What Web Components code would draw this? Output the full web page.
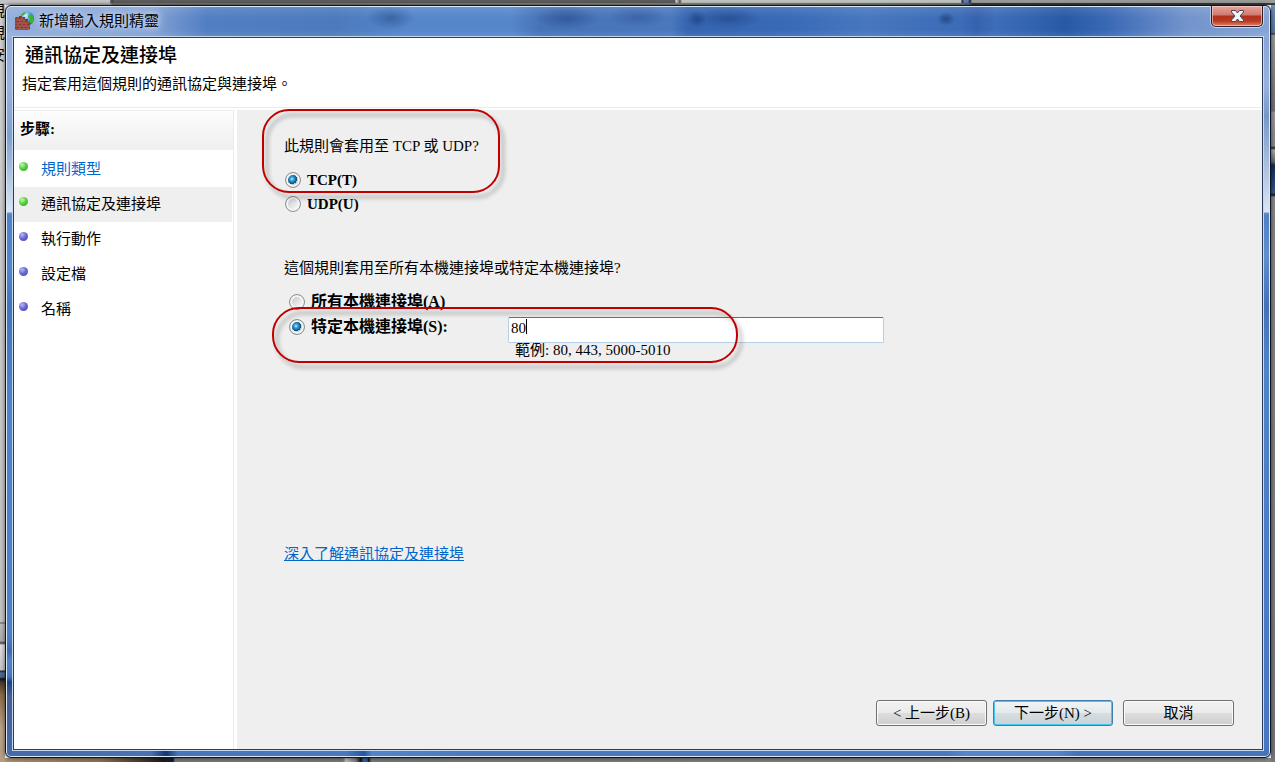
<!DOCTYPE html>
<html lang="zh-Hant">
<head>
<meta charset="utf-8">
<title>新增輸入規則精靈</title>
<style>
html { height: 100%; }
body {
  margin: 0; min-height: 100%; display: flex; box-sizing: border-box;
  font-family: "Liberation Serif", "Noto Sans CJK TC", serif; font-size: 15px; line-height: 24px; color: #000;
}
</style>
</head>
<body>
<desk-top>
  <glass-window caption="新增輸入規則精靈">
    <page-header slot="header">
      <span slot="title">通訊協定及連接埠</span>
      <span slot="summary">指定套用這個規則的通訊協定與連接埠。</span>
    </page-header>
    <wizard-steps slot="steps">
      <wizard-step state="done" href="#type">規則類型</wizard-step>
      <wizard-step state="done" current>通訊協定及連接埠</wizard-step>
      <wizard-step>執行動作</wizard-step>
      <wizard-step>設定檔</wizard-step>
      <wizard-step>名稱</wizard-step>
    </wizard-steps>
    <ports-form></ports-form>
    <wizard-actions slot="actions"></wizard-actions>
  </glass-window>
</desk-top>

<script>
function define(name, html) {
  const template = document.createElement('template');
  template.innerHTML = html;
  customElements.define(name, class extends HTMLElement {
    constructor() {
      super();
      this.attachShadow({ mode: 'open' }).append(template.content.cloneNode(true));
    }
    connectedCallback() {
      const caption = this.shadowRoot.querySelector('[data-caption]');
      if (caption) caption.textContent = this.getAttribute('caption');
      const link = this.shadowRoot.querySelector('a[data-step]');
      if (link && this.hasAttribute('href')) link.href = this.getAttribute('href');
    }
  });
}

define('desk-top', `
<style>
:host {
  flex: 1; display: flex; box-sizing: border-box; padding: 5px 4px 4px 5px; position: relative; overflow: hidden;
  background:
    linear-gradient(90deg, #c4c4c4 110px, #777 110px, #444 112px, #5c5c5c 114px, #5c5c5c 675px, #ddd 676px, #555 680px, #c0c5c0 682px, #c0c5c0 961px, #223 962px, #5c7da5 964px, #5c7da5 968px, #223 970px, #999c98 972px) 0 0 / 100% 3px no-repeat,
    linear-gradient(90deg, #b8b8b8 110px, #777 112px, #8a8a8a 675px, #777 962px, #46648c 970px, #3a3c42 972px) 0 3px / 100% 2px no-repeat,
    linear-gradient(#d0d0d0, #c2c2c2 622px, #555 623px, #bbb 624px, #aaa 641px, #444 643px, #ddd 645px, #c4c4c4 670px, #223 671px, #4e6c9a 673px, #46648c 677px, #111 679px, #49382a 682px, #8d6b49 695px, #bba38a 730px, #b49c82) 0 0 / 5px 100% no-repeat,
    linear-gradient(#6f94be 4px, #57759d 33px, #223 34px, #999 35px, #707070 111px, #999 112px, #888 146px, #222 148px, #aaa 150px, #666 162px, #142b52 165px, #31568c 193px, #111 195px, #888 197px, #777) 100% 0 / 4px 100% no-repeat,
    linear-gradient(90deg, #a89074 5px, #8a7157 100px, #211b16 164px, #16213b 167px, #111a2b 173px, #777 175px, #777 343px, #bbb 346px, #777 356px, #111 361px, #345b93 363px, #345b93 367px, #111 369px, #777 371px, #858585) 0 100% / 100% 4px no-repeat;
}
.behind { position: absolute; left: -10px; top: 0; display: flex; flex-direction: column; line-height: 22px; }
::slotted(*) { position: relative; }
</style>
<div class="behind" aria-hidden="true"><span>規</span><span>規</span><span>安</span></div>
<slot></slot>`);

define('glass-window', `
<style>
:host {
  flex: 1; display: flex; flex-direction: column; box-sizing: border-box;
  border: 1px solid #0c1424; border-radius: 6px; padding: 0 7px 7px;
  box-shadow: inset 0 0 0 1px #d9e8f7, 0 0 4px rgba(0,0,0,.6);
  background:
    radial-gradient(ellipse 24px 12px at 385px 12px, rgba(30,70,130,.5), transparent) 0 0 / 100% 32px no-repeat,
    radial-gradient(ellipse 32px 12px at 561px 12px, rgba(30,65,130,.5), transparent) 0 0 / 100% 32px no-repeat,
    radial-gradient(ellipse 30px 11px at 632px 11px, rgba(30,65,130,.35), transparent) 0 0 / 100% 32px no-repeat,
    radial-gradient(ellipse 10px 9px at 691px 13px, rgba(15,45,110,.5), transparent) 0 0 / 100% 32px no-repeat,
    radial-gradient(ellipse 32px 11px at 723px 12px, rgba(20,50,115,.4), transparent) 0 0 / 100% 32px no-repeat,
    radial-gradient(ellipse 9px 7px at 940px 13px, rgba(20,50,100,.6), transparent) 0 0 / 100% 32px no-repeat,
    linear-gradient(rgba(255,255,255,.12), transparent 12px, transparent 24px, rgba(255,255,255,.1)) 0 0 / 100% 32px no-repeat,
    linear-gradient(90deg, #94aedb, #7f9fd3 150px, #527fc3 200px, #4c7abd 330px, #5587ca 400px, #5687ca 505px, #4673b7 535px, #4b78bd 665px, #3565b0 682px, #386ab7 780px, #4777be 860px, #3c6bb7 955px, #3663af 970px, #3d6db8 990px, #275aa5 1060px, #3968b4 1100px, #7294cc 1180px, #86a4d6) 0 0 / 100% 32px no-repeat,
    linear-gradient(90deg, #4669a8 8px, #4a72b1 145px, #14366b 160px, #4775b9 172px, #4b79bd 340px, #27569d 358px, #5384c8 366px, #4a78bd 480px, #4a78bd 940px, #5686c8 960px, #5686c8 1050px, #4674b9 1070px) 0 100% / 100% 8px no-repeat,
    linear-gradient(#93aedc 30px, #97b2df 80px, #809fd0 130px, #dbe5f3 206px, #6b90c9 207px, #4f82c6 210px, #5586ca 260px, #4474b9 300px, #5183c8 400px, #4d7fc5 630px, #4069ac 645px, #5282c8 655px, #4a78c0 670px, #1d4387 676px, #4a5e91 690px, #4669a8) 0 0 / 50% 100% no-repeat,
    linear-gradient(#86a4d6 30px, #97b2df 80px, #7698c9 110px, #dbe5f3 206px, #6b90c9 207px, #4f82c6 210px, #5f8fce 250px, #4372b7 300px, #5183c8 360px, #4776c0) 100% 0 / 50% 100% no-repeat;
}
.bar { height: 31px; display: flex; align-items: flex-start; justify-content: space-between; }
.name { display: flex; align-items: center; gap: 5px; padding: 3px 10px 0 2px; }
.name span {
  line-height: 24px;
  text-shadow: 0 0 5px #c3d4ef, 0 0 8px #c3d4ef, 0 0 12px #c3d4ef;
}
.name svg { width: 19px; height: 20px; }
.close {
  width: 52px; height: 21px; margin: 0; padding: 0; display: grid; place-items: center;
  border: 1px solid #301c27; border-top: 0; border-radius: 0 0 5px 5px;
  box-shadow: inset 0 0 0 1px rgba(255,220,215,.6), 0 1px 0 #c8d8ef, -1px 0 0 #b8cbe8, 1px 0 0 #c8d8ef;
  background: linear-gradient(#e6a49c, #d07a70 45%, #b4301c 50%, #b83a22 75%, #df8267);
}
.client {
  flex: 1; display: grid; grid-template-columns: 223px 1fr; grid-template-rows: auto 1fr auto;
  border: 1px solid #2d3c58; outline: 1px solid #c5d9ef; background: #fff;
}
.head { grid-column: 1 / 3; }
.side { grid-row: 2 / 4; display: flex; }
.body, .foot { background: #efefef; }
</style>
<div class="bar">
  <div class="name">
    <svg viewBox="0 0 19 20" aria-hidden="true">
      <defs><radialGradient id="g" cx=".4" cy=".3" r=".8"><stop offset="0" stop-color="#d8f4ff"/><stop offset=".5" stop-color="#3d9ad8"/><stop offset="1" stop-color="#143f87"/></radialGradient></defs>
      <circle cx="12" cy="7.500" r="7" fill="url(#g)"/>
      <path d="M6 4Q8 1 11 1L10 3 7 5ZM14 3L17 4Q20 9 17 13L14 11 15 8 13 6Z" fill="#36b52c"/>
      <path d="M1 6H4V5H7V6H10V8H13V11H15V18L13 19H1L0 18V7Z" fill="#8a3b30"/>
      <path d="M0 9H10M0 12H14M0 15H15M1 18H14M3 6V9M7 6V9M5 9V12M9 9V12M3 12V15M7 12V15M11 12V15M5 15V18M9 15V18M13 15V18" stroke="#bd7b6e" stroke-width=".6" fill="none"/>
    </svg>
    <span data-caption></span>
  </div>
  <button class="close" aria-label="關閉">
    <svg width="13" height="12" viewBox="0 0 13 12" aria-hidden="true"><path d="M.5.5H4.500L6.500 3 8.500.5H12.500V2L9 6 12.500 10V11.500H8.500L6.500 9 4.500 11.500H.5V10L4 6 .5 2Z" fill="#f4f4f4" stroke="#46475d"/></svg>
  </button>
</div>
<div class="client">
  <div class="head"><slot name="header"></slot></div>
  <div class="side"><slot name="steps"></slot></div>
  <div class="body"><slot></slot></div>
  <div class="foot"><slot name="actions"></slot></div>
</div>`);

define('page-header', `
<style>
:host { display: block; padding: 5px 8px 11px; border-bottom: 1px solid #ececec; margin-bottom: 2px; }
h1 { margin: 0; padding-left: 3px; font-size: 19px; line-height: 26px; font-weight: 500; }
p { margin: 3px 0 0; }
</style>
<h1><slot name="title"></slot></h1>
<p><slot name="summary"></slot></p>`);

define('wizard-steps', `
<style>
:host { flex: 1; display: block; margin-right: 3px; border: solid #ececec; border-width: 1px 1px 0 0; }
h2 { margin: 0 0 2px; padding: 6px 6px 9px; font-size: 15px; line-height: 24px; font-weight: bold; background: linear-gradient(#fdfdfd, #efefef); }
nav { display: flex; flex-direction: column; padding-right: 1px; }
</style>
<h2>步驟:</h2>
<nav><slot></slot></nav>`);

define('wizard-step', `
<style>
:host { display: flex; height: 35px; --hi: #b9b9f4; --mid: #6262cd; --low: #4747a0; }
:host([state="done"]) { --hi: #c5f5b8; --mid: #50cc35; --low: #3a9b28; }
:host([current]) { background: #efefef; }
i { width: 9px; height: 9px; margin: 10px 13px 0 5px; border-radius: 50%; background: radial-gradient(circle at 35% 30%, var(--hi), var(--mid) 50%, var(--low)); }
a { padding-top: 5px; color: inherit; text-decoration: none; }
a[href] { color: #0066cc; }
</style>
<i></i><a data-step><slot></slot></a>`);

define('call-out', `
<style>
:host {
  position: absolute; box-sizing: border-box; pointer-events: none;
  border: 2px solid #c00000; border-radius: 27px;
  filter: drop-shadow(4px 5px 2px rgba(0,0,0,.35));
}
</style>`);

define('ports-form', `
<style>
:host { display: block; padding: 24px 47px; }
.group { position: relative; }
fieldset { margin: 0; padding: 0; border: 0; min-width: 0; }
legend { padding: 0; margin-bottom: 10px; }
.choice { display: flex; align-items: center; gap: 6px; height: 24px; padding-left: 1px; font-weight: bold; }
input[type=radio] {
  appearance: none; flex: none; width: 16px; height: 16px; margin: 0; border: 1px solid #8e8f8f; border-radius: 50%;
  box-shadow: inset 0 0 0 2px #f4f4f4; background: linear-gradient(135deg, #b9bfc6, #f4f4f4 75%);
}
input[type=radio]:checked {
  background: radial-gradient(circle at 6px 6px, #b9eefb 0, #2f9fd6 2px, #0b4a7c 5px, #b5c5cf 5px);
}
.ports { margin-top: 40px; }
.grid { display: grid; grid-template-columns: 224px minmax(0, 376px); grid-template-rows: 25px 24px 24px; }
.grid .choice { padding-left: 5px; font-size: 16px; }
.grid .choice:first-child { grid-column: 1 / 3; }
.field { position: relative; padding-top: 1px; }
.field input {
  width: 100%; height: 26px; box-sizing: border-box; margin: 0; padding: 0 2px 3px; outline: 0;
  border: 1px solid #b5cfe7; border-top-color: #3d7bad; border-radius: 2px; background: #fff; font: inherit; color: inherit;
}
.caret { position: absolute; left: 18px; top: 4px; width: 1px; height: 15px; background: #000; }
.hint { grid-column: 2; padding-left: 7px; line-height: 22px; }
.more { display: inline-block; margin-top: 179px; color: #0066cc; }
.one { left: -22px; top: -25px; width: 238px; height: 84px; }
.two { left: -12px; bottom: 0; width: 466px; height: 56px; }
</style>
<form>
  <div class="group">
    <fieldset>
      <legend>此規則會套用至 TCP 或 UDP?</legend>
      <label class="choice"><input type="radio" name="protocol" checked>TCP(T)</label>
      <label class="choice"><input type="radio" name="protocol">UDP(U)</label>
    </fieldset>
    <call-out class="one"></call-out>
  </div>
  <div class="group ports">
    <fieldset>
      <legend>這個規則套用至所有本機連接埠或特定本機連接埠?</legend>
      <div class="grid">
        <label class="choice"><input type="radio" name="scope">所有本機連接埠(A)</label>
        <label class="choice"><input type="radio" name="scope" checked>特定本機連接埠(S):</label>
        <div class="field"><input type="text" value="80" aria-label="特定本機連接埠" aria-describedby="hint"><i class="caret"></i></div>
        <div class="hint" id="hint">範例: 80, 443, 5000-5010</div>
      </div>
    </fieldset>
    <call-out class="two"></call-out>
  </div>
  <a class="more" href="#learn">深入了解通訊協定及連接埠</a>
</form>`);

define('wizard-actions', `
<style>
:host { display: flex; justify-content: flex-end; padding: 0 28px 23px; }
button {
  width: 111px; height: 26px; margin: 0; padding: 0; font: inherit; color: #000;
  border: 1px solid #707070; border-radius: 3px; box-shadow: inset 0 0 0 1px #fbfbfb;
  background: linear-gradient(#f2f2f2, #ebebeb 48%, #dddddd 50%, #cfcfcf);
}
.next {
  width: 120px; margin: 0 10px 0 6px; border-color: #3c7fb1; box-shadow: inset 0 0 0 1px #48c8f0;
  background: linear-gradient(#f0f3f4, #e4ebed 48%, #d5dfe3 50%, #c9d2d5);
}
</style>
<button type="button">&lt; 上一步(B)</button>
<button type="button" class="next">下一步(N) &gt;</button>
<button type="button">取消</button>`);
</script>
</body>
</html>
